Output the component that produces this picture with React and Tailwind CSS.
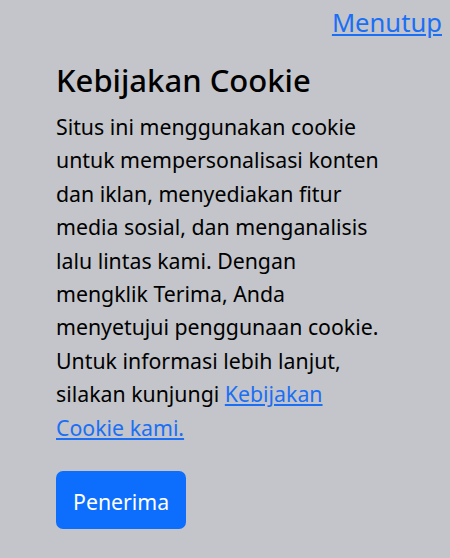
export default function App() {
  return (
    <div className="min-h-[558px] w-full bg-[#c3c5ca] font-['Noto_Sans',sans-serif] text-black">
      <div className="flex justify-end pr-[8px] pt-[4px]">
        <a href="#" className="text-[25.6px] leading-[38px] text-[#1a6ff5] underline">
          Menutup
        </a>
      </div>
      <div className="pl-[56px] pt-[18px]">
        <h2 className="text-[31px] font-medium leading-[40px]">Kebijakan Cookie</h2>
        <p className="mt-[10px] w-[330px] text-[21.3px] leading-[33.4px]">
          Situs ini menggunakan cookie untuk mempersonalisasi konten dan iklan, menyediakan fitur
          media sosial, dan menganalisis lalu lintas kami. Dengan mengklik Terima, Anda menyetujui
          penggunaan cookie. Untuk informasi lebih lanjut, silakan kunjungi{' '}
          <a href="#" className="text-[#1a6ff5] underline">
            Kebijakan Cookie kami.
          </a>
        </p>
        <button className="mt-[27px] h-[58px] rounded-[7px] bg-[#0d6efd] px-[17px] pt-[3px] text-[21.3px] text-white">
          Penerima
        </button>
      </div>
    </div>
  );
}
